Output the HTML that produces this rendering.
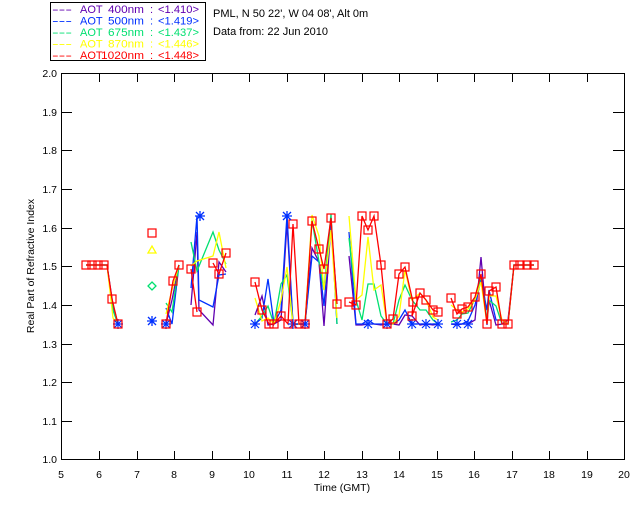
<!DOCTYPE html>
<html><head><meta charset="utf-8"><style>
html,body{margin:0;padding:0;background:#fff;}
svg{display:block;font-family:"Liberation Sans",sans-serif;}
</style></head><body>
<svg width="640" height="512" viewBox="0 0 640 512" xmlns="http://www.w3.org/2000/svg">
<rect width="640" height="512" fill="#fff"/>
<!-- legend -->
<rect x="50.5" y="2.5" width="155" height="58" fill="none" stroke="#000"/>
<g font-size="11">
<g fill="#6000b0"><text x="52" y="13" textLength="20" lengthAdjust="spacingAndGlyphs">---</text><text x="80" y="13">AOT</text><text x="108" y="13" textLength="36" lengthAdjust="spacingAndGlyphs">400nm</text><text x="150" y="13">:</text><text x="158" y="13" textLength="41" lengthAdjust="spacingAndGlyphs">&lt;1.410&gt;</text></g>
<g fill="#0030ff"><text x="52" y="24.5" textLength="20" lengthAdjust="spacingAndGlyphs">---</text><text x="80" y="24.5">AOT</text><text x="108" y="24.5" textLength="36" lengthAdjust="spacingAndGlyphs">500nm</text><text x="150" y="24.5">:</text><text x="158" y="24.5" textLength="41" lengthAdjust="spacingAndGlyphs">&lt;1.419&gt;</text></g>
<g fill="#00e070"><text x="52" y="36" textLength="20" lengthAdjust="spacingAndGlyphs">---</text><text x="80" y="36">AOT</text><text x="108" y="36" textLength="36" lengthAdjust="spacingAndGlyphs">675nm</text><text x="150" y="36">:</text><text x="158" y="36" textLength="41" lengthAdjust="spacingAndGlyphs">&lt;1.437&gt;</text></g>
<g fill="#ffff00"><text x="52" y="47.5" textLength="20" lengthAdjust="spacingAndGlyphs">---</text><text x="80" y="47.5">AOT</text><text x="108" y="47.5" textLength="36" lengthAdjust="spacingAndGlyphs">870nm</text><text x="150" y="47.5">:</text><text x="158" y="47.5" textLength="41" lengthAdjust="spacingAndGlyphs">&lt;1.446&gt;</text></g>
<g fill="#ff0000"><text x="52" y="59" textLength="20" lengthAdjust="spacingAndGlyphs">---</text><text x="80" y="59">AOT</text><text x="101" y="59" textLength="43" lengthAdjust="spacingAndGlyphs">1020nm</text><text x="150" y="59">:</text><text x="158" y="59" textLength="41" lengthAdjust="spacingAndGlyphs">&lt;1.448&gt;</text></g>
</g>
<text x="213" y="17" font-size="11">PML, N 50 22', W 04 08', Alt 0m</text>
<text x="213" y="35" font-size="11">Data from: 22 Jun 2010</text>
<!-- axes -->
<rect x="61.5" y="73.5" width="563" height="386" fill="none" stroke="#000"/>
<g stroke="#000">
<path d="M99.5 460v-9M137.5 460v-9M174.5 460v-9M212.5 460v-9M249.5 460v-9M287.5 460v-9M324.5 460v-9M362.5 460v-9M399.5 460v-9M437.5 460v-9M474.5 460v-9M512.5 460v-9M549.5 460v-9M587.5 460v-9"/>
<path d="M99.5 73v9M137.5 73v9M174.5 73v9M212.5 73v9M249.5 73v9M287.5 73v9M324.5 73v9M362.5 73v9M399.5 73v9M437.5 73v9M474.5 73v9M512.5 73v9M549.5 73v9M587.5 73v9"/>
<path d="M61 112.5h11M61 150.5h11M61 189.5h11M61 228.5h11M61 266.5h11M61 305.5h11M61 344.5h11M61 382.5h11M61 421.5h11"/>
<path d="M624 112.5h-11M624 150.5h-11M624 189.5h-11M624 228.5h-11M624 266.5h-11M624 305.5h-11M624 344.5h-11M624 382.5h-11M624 421.5h-11"/>
</g>
<g font-size="10.5" text-anchor="end">
<text x="57" y="77">2.0</text><text x="57" y="116">1.9</text><text x="57" y="154">1.8</text><text x="57" y="193">1.7</text><text x="57" y="232">1.6</text><text x="57" y="270">1.5</text><text x="57" y="309">1.4</text><text x="57" y="348">1.3</text><text x="57" y="386">1.2</text><text x="57" y="425">1.1</text><text x="57" y="463">1.0</text>
</g>
<g font-size="10.5" text-anchor="middle">
<text x="61" y="478">5</text><text x="99" y="478">6</text><text x="137" y="478">7</text><text x="174" y="478">8</text><text x="212" y="478">9</text><text x="249" y="478">10</text><text x="287" y="478">11</text><text x="324" y="478">12</text><text x="362" y="478">13</text><text x="399" y="478">14</text><text x="437" y="478">15</text><text x="474" y="478">16</text><text x="512" y="478">17</text><text x="549" y="478">18</text><text x="587" y="478">19</text><text x="624" y="478">20</text>
</g>
<text x="342" y="491" font-size="10.5" text-anchor="middle">Time (GMT)</text>
<text transform="translate(34,266) rotate(-90)" font-size="10.5" text-anchor="middle">Real Part of Refractive Index</text>
<!-- data -->
<g fill="none" stroke-width="1.3">
<g stroke="#6000b0">
<polyline points="86,265 107,265 113,305 118,324"/>
<polyline points="166,324 172,300 179,265"/>
<polyline points="191,305 197,232 199,310 213,325 219,262 226,272"/>
<polyline points="255,315 262,296 268,325 274,324 281,320 287,223 293,325 299,324 305,325 312,248 319,262 324,326 331,225 337,300"/>
<polyline points="349,256 356,325 362,325 368,324 374,324 381,325 387,324 393,324 399,325 405,315 412,316 420,325 426,324 433,325 438,324"/>
<polyline points="451,324 457,325 462,324 468,324 475,320 481,257 487,325 489,300 496,325 502,324 508,320 514,265 534,265"/>
</g>
<g stroke="#0030ff">
<polyline points="86,265 107,265 113,310 118,324"/>
<polyline points="166,308 172,324 179,265"/>
<polyline points="191,288 197,216 199,300 213,307 219,275 226,274"/>
<polyline points="255,324 262,318 268,279 274,324 281,310 287,215 293,324 299,324 305,324 312,256 319,262 324,306 331,218 337,324"/>
<polyline points="349,232 356,324 362,324 368,320 374,324 381,324 387,324 393,324 399,320 405,310 412,324 420,324 426,324 433,324 438,324"/>
<polyline points="451,324 457,324 462,324 468,321 475,305 481,280 487,310 489,290 496,320 502,320 508,324 514,265 534,265"/>
</g>
<g stroke="#00e070">
<polyline points="86,265 107,265 113,310 118,324"/>
<polyline points="166,303 172,312 179,265"/>
<polyline points="191,242 197,271 213,232 219,250 226,264"/>
<polyline points="255,324 262,316 268,306 274,324 281,284 287,275 293,324 299,324 305,324 312,220 319,262 324,290 331,214 337,324"/>
<polyline points="349,238 356,300 362,320 368,284 374,284 381,316 387,324 393,324 399,300 405,285 412,300 420,310 426,310 433,320 438,324"/>
<polyline points="451,322 457,320 462,314 468,313 475,299 481,276 487,320 489,300 496,306 502,324 508,324 514,265 534,265"/>
</g>
<g stroke="#ffff00">
<polyline points="86,265 107,265 113,318 118,324"/>
<polyline points="166,314 172,290 179,265"/>
<polyline points="191,266 197,261 213,256 219,232 226,268"/>
<polyline points="255,298 262,321 268,318 274,324 281,300 287,267 293,324 299,324 305,324 312,215 319,236 324,290 331,230 337,318"/>
<polyline points="349,216 356,300 362,295 368,237 374,290 381,285 387,324 393,324 399,316 405,270 412,300 420,293 426,300 433,317 438,320"/>
<polyline points="451,305 457,310 462,312 468,309 475,300 481,282 487,324 489,296 496,296 502,320 508,324 514,265 534,265"/>
</g>
<g stroke="#ff0000">
<polyline points="86,265 107,265 112,299 118,324"/>
<polyline points="166,324 173,281 179,265"/>
<polyline points="191,269 197,312"/>
<polyline points="213,263 219,274 226,253"/>
<polyline points="255,282 262,310 269,324 274,324 281,316 288,324 293,224 299,324 305,324 312,221 319,249 324,269 331,218 337,304"/>
<polyline points="349,302 356,305 362,216 368,230 374,216 381,265 387,324 393,319 399,274 405,267 413,302 412,316 420,293 426,300 433,310 438,312"/>
<polyline points="451,298 457,314 462,309 468,307 475,297 481,274 487,324 489,291 496,287 502,324 508,324 514,265 534,265"/>
</g>
<g stroke="#0030ff" stroke-width="1.2">
<path d="M113 324h10M118 319v10M114 320l8 8M122 320l-8 8"/>
<path d="M161 324h10M166 319v10M162 320l8 8M170 320l-8 8"/>
<path d="M250 324h10M255 319v10M251 320l8 8M259 320l-8 8"/>
<path d="M288 324h10M293 319v10M289 320l8 8M297 320l-8 8"/>
<path d="M300 324h10M305 319v10M301 320l8 8M309 320l-8 8"/>
<path d="M363 324h10M368 319v10M364 320l8 8M372 320l-8 8"/>
<path d="M382 324h10M387 319v10M383 320l8 8M391 320l-8 8"/>
<path d="M407 324h10M412 319v10M408 320l8 8M416 320l-8 8"/>
<path d="M421 324h10M426 319v10M422 320l8 8M430 320l-8 8"/>
<path d="M433 324h10M438 319v10M434 320l8 8M442 320l-8 8"/>
<path d="M452 324h10M457 319v10M453 320l8 8M461 320l-8 8"/>
<path d="M463 324h10M468 319v10M464 320l8 8M472 320l-8 8"/>
</g>
<g stroke="#ff0000" stroke-width="1.2">
<rect x="82" y="261" width="8" height="8"/><rect x="88" y="261" width="8" height="8"/><rect x="94" y="261" width="8" height="8"/><rect x="100" y="261" width="8" height="8"/><rect x="108" y="295" width="8" height="8"/><rect x="114" y="320" width="8" height="8"/>
<rect x="148" y="229" width="8" height="8"/>
<rect x="162" y="320" width="8" height="8"/><rect x="169" y="277" width="8" height="8"/><rect x="175" y="261" width="8" height="8"/>
<rect x="187" y="265" width="8" height="8"/><rect x="193" y="308" width="8" height="8"/>
<rect x="209" y="259" width="8" height="8"/><rect x="215" y="270" width="8" height="8"/><rect x="222" y="249" width="8" height="8"/>
<rect x="251" y="278" width="8" height="8"/><rect x="258" y="306" width="8" height="8"/><rect x="265" y="320" width="8" height="8"/><rect x="270" y="320" width="8" height="8"/><rect x="277" y="312" width="8" height="8"/><rect x="284" y="320" width="8" height="8"/><rect x="289" y="220" width="8" height="8"/><rect x="295" y="320" width="8" height="8"/><rect x="301" y="320" width="8" height="8"/><rect x="308" y="217" width="8" height="8"/><rect x="315" y="245" width="8" height="8"/><rect x="320" y="265" width="8" height="8"/><rect x="327" y="214" width="8" height="8"/><rect x="333" y="300" width="8" height="8"/>
<rect x="345" y="298" width="8" height="8"/><rect x="352" y="301" width="8" height="8"/><rect x="358" y="212" width="8" height="8"/><rect x="364" y="226" width="8" height="8"/><rect x="370" y="212" width="8" height="8"/><rect x="377" y="261" width="8" height="8"/><rect x="383" y="320" width="8" height="8"/><rect x="389" y="315" width="8" height="8"/><rect x="395" y="270" width="8" height="8"/><rect x="401" y="263" width="8" height="8"/><rect x="408" y="312" width="8" height="8"/><rect x="409" y="298" width="8" height="8"/><rect x="416" y="289" width="8" height="8"/><rect x="422" y="296" width="8" height="8"/><rect x="429" y="306" width="8" height="8"/><rect x="434" y="308" width="8" height="8"/>
<rect x="447" y="294" width="8" height="8"/><rect x="453" y="310" width="8" height="8"/><rect x="458" y="305" width="8" height="8"/><rect x="464" y="303" width="8" height="8"/><rect x="471" y="293" width="8" height="8"/><rect x="477" y="270" width="8" height="8"/><rect x="483" y="320" width="8" height="8"/><rect x="485" y="287" width="8" height="8"/><rect x="492" y="283" width="8" height="8"/><rect x="498" y="320" width="8" height="8"/><rect x="504" y="320" width="8" height="8"/><rect x="510" y="261" width="8" height="8"/><rect x="516" y="261" width="8" height="8"/><rect x="523" y="261" width="8" height="8"/><rect x="530" y="261" width="8" height="8"/>
</g>
<path d="M148 253l4-7 4 7z" stroke="#ffff00"/>
<path d="M152 282l4 4-4 4-4-4z" stroke="#00e070"/>
<path d="M147 321h10M152 316v10M148 317l8 8M156 317l-8 8" stroke="#0030ff"/>
<path d="M195 216h10M200 211v10M196 212l8 8M204 212l-8 8" stroke="#0030ff"/>
<path d="M282 216h10M287 211v10M283 212l8 8M291 212l-8 8" stroke="#0030ff"/>
</g>
</svg>
</body></html>
